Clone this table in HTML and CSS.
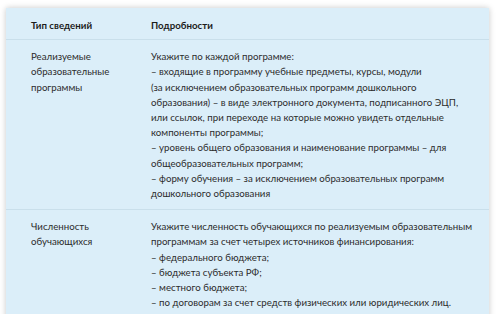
FILE: index.html
```html
<!DOCTYPE html>
<html lang="ru">
<head>
<meta charset="utf-8">
<link rel="stylesheet" href="styles.css">
</head>
<body>
<div class="card">
  <div class="row head">
    <div class="c1">Тип сведений</div>
    <div class="c2">Подробности</div>
  </div>
  <div class="row">
    <div class="c1">Реализуемые<br>образовательные<br>программы</div>
    <div class="c2">Укажите по каждой программе:<br>– входящие в программу учебные предметы, курсы, модули<br>(за исключением образовательных программ дошкольного<br>образования) – в виде электронного документа, подписанного ЭЦП,<br>или ссылок, при переходе на которые можно увидеть отдельные<br>компоненты программы;<br>– уровень общего образования и наименование программы – для<br>общеобразовательных программ;<br>– форму обучения – за исключением образовательных программ<br>дошкольного образования</div>
  </div>
  <div class="row">
    <div class="c1">Численность<br>обучающихся</div>
    <div class="c2">Укажите численность обучающихся по реализуемым образовательным<br>программам за счет четырех источников финансирования:<br>– федерального бюджета;<br>– бюджета субъекта РФ;<br>– местного бюджета;<br>– по договорам за счет средств физических или юридических лиц.</div>
  </div>
</div>
</body>
</html>
```
FILE: styles.css
```css
html, body {
  background: #ffffff;
}
body {
  margin: 0;
  padding: 8px 11px 0 6px;
  font-family: "Lato", sans-serif;
  font-size: 9.7px;
  line-height: 15.2px;
  color: #2c2c2c;
  overflow: hidden;
}
.card {
  background: #dbeef9;
  box-shadow: 0 0 6px rgba(0, 0, 0, 0.22);
  height: 320px;
}
.row {
  display: grid;
  grid-template-columns: 120px minmax(0, 1fr);
  padding: 9px 10px 8px 25px;
  border-top: 1px solid #c9dfeb;
  white-space: nowrap;
}
.row.head {
  border-top: none;
  padding-top: 10px;
  padding-bottom: 6px;
  font-weight: 700;
  color: #1c1c1c;
}
```
